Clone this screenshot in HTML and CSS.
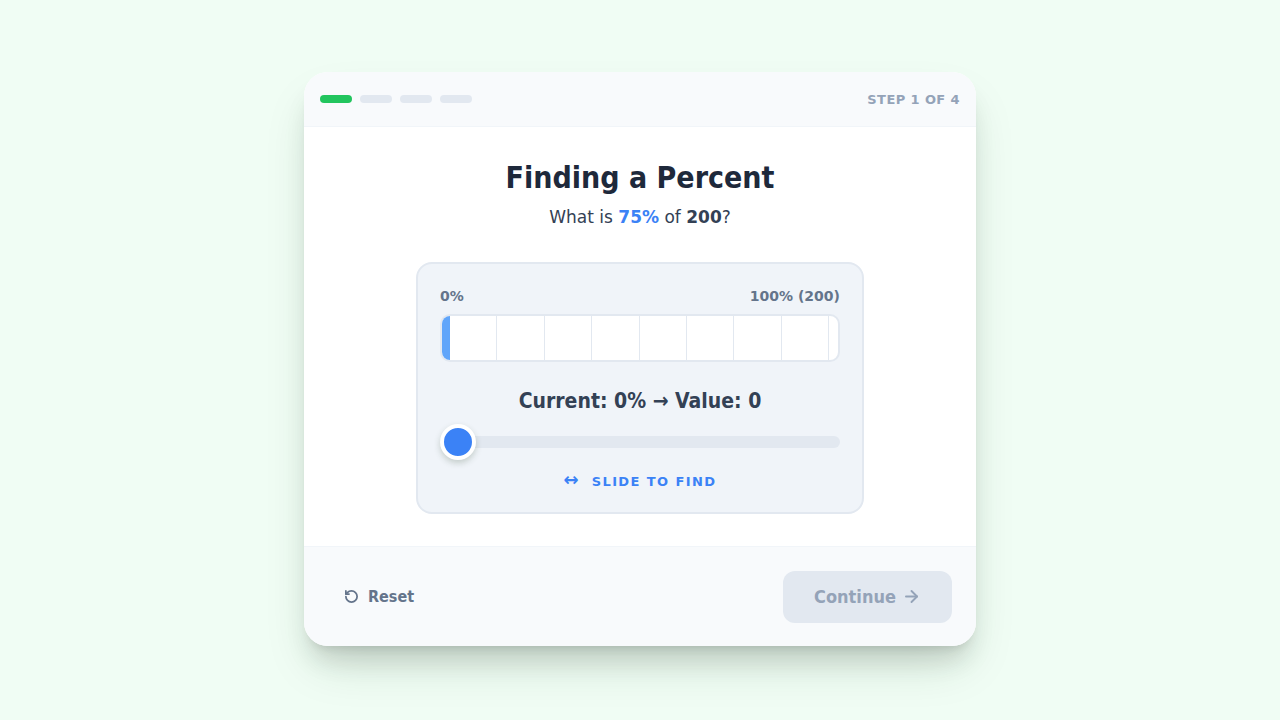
FILE: index.html
```html
<!DOCTYPE html>
<html>
<head>
<meta charset="utf-8">
<link rel="stylesheet" href="styles.css">
</head>
<body>
<div class="card">
  <div class="header">
    <div class="steps">
      <span class="dot active"></span><span class="dot"></span><span class="dot"></span><span class="dot"></span>
    </div>
    <div class="step-label">STEP 1 OF 4</div>
  </div>
  <div class="main">
    <h1 class="title">Finding a Percent</h1>
    <p class="question">What is <b class="pct">75%</b> of <b>200</b>?</p>
    <div class="panel">
      <div class="scale"><span>0%</span><span>100% (200)</span></div>
      <div class="bar">
        <div class="fill"></div>
        <div class="cell"></div><div class="cell"></div><div class="cell"></div><div class="cell"></div>
        <div class="cell"></div><div class="cell"></div><div class="cell"></div><div class="cell"></div><div class="cell"></div>
      </div>
      <div class="current">Current: 0% → Value: 0</div>
      <div class="slider">
        <div class="track"></div>
        <div class="knob"></div>
      </div>
      <div class="hint"><span class="hint-arrow">↔</span>SLIDE TO FIND</div>
    </div>
  </div>
  <div class="footer">
    <button class="reset">
      <svg width="15" height="15" viewBox="0 0 24 24" fill="none" stroke="currentColor" stroke-width="2.8" stroke-linecap="round" stroke-linejoin="round"><path d="M3 12a9 9 0 1 0 9-9 9.75 9.75 0 0 0-6.74 2.74L3 8"/><path d="M3 3v5h5"/></svg>
      <span>Reset</span>
    </button>
    <button class="continue"><span>Continue</span>
      <svg width="19" height="19" viewBox="0 0 24 24" fill="none" stroke="currentColor" stroke-width="2.4" stroke-linecap="round" stroke-linejoin="round"><path d="M5 12h14"/><path d="M12 5l7 7-7 7"/></svg>
    </button>
  </div>
</div>
</body>
</html>
```
FILE: styles.css
```css
* { box-sizing: border-box; }
html, body { margin: 0; padding: 0; }
body {
  width: 1280px;
  height: 720px;
  background: #f0fdf4;
  font-family: "DejaVu Sans", Verdana, sans-serif;
  display: flex;
  justify-content: center;
  align-items: flex-start;
  padding-top: 72px;
}
.card {
  width: 672px;
  height: 574px;
  background: #ffffff;
  border-radius: 24px;
  overflow: hidden;
  display: flex;
  flex-direction: column;
  box-shadow: 0 20px 25px -5px rgba(0,0,0,0.1), 0 8px 10px -6px rgba(0,0,0,0.1), 0 25px 50px -12px rgba(20,60,30,0.18);
}
.header {
  flex: none;
  height: 55px;
  background: #f8fafc;
  border-bottom: 1px solid #f1f5f9;
  display: flex;
  align-items: center;
  justify-content: space-between;
  padding: 0 16px 0 16px;
}
.steps { display: flex; gap: 8px; }
.dot { width: 32px; height: 8px; border-radius: 4px; background: #e2e8f0; display: block; }
.dot.active { background: #22c55e; }
.step-label {
  font-size: 13px;
  font-weight: bold;
  color: #94a3b8;
  letter-spacing: 0.4px;
}
.main {
  flex: 1;
  display: flex;
  flex-direction: column;
  align-items: center;
  padding-top: 32px;
}
.title {
  margin: 0;
  font-family: "DejaVu Sans Condensed", "DejaVu Sans", sans-serif;
  font-stretch: condensed;
  font-size: 30px;
  line-height: 38px;
  color: #1e293b;
  font-weight: bold;
}
.question {
  margin: 8px 0 0;
  font-size: 17px;
  line-height: 24px;
  color: #334155;
}
.question b { color: #334155; }
.question .pct { color: #3b82f6; }
.panel {
  flex: none;
  margin-top: 33px;
  width: 448px;
  height: 252px;
  background: #f0f4f9;
  border: 2px solid #e2e8f0;
  border-radius: 16px;
  padding: 23px 22px 0;
  display: flex;
  flex-direction: column;
}
.panel > * { flex: none; }
.scale {
  display: flex;
  justify-content: space-between;
  font-size: 14px;
  font-weight: bold;
  color: #64748b;
  line-height: 18px;
}
.bar {
  margin-top: 9px;
  height: 48px;
  border: 2px solid #e2e8f0;
  border-radius: 10px;
  background: #ffffff;
  display: flex;
  overflow: hidden;
}
.fill { width: 8px; flex: none; background: #60a5fa; }
.cell { width: 47.4px; flex: none; border-right: 1px solid #e2e8f0; }
.current {
  margin-top: 25px;
  text-align: center;
  font-family: "DejaVu Sans Condensed", "DejaVu Sans", sans-serif;
  font-stretch: condensed;
  font-size: 21px;
  font-weight: bold;
  color: #334155;
  line-height: 28px;
}
.slider {
  position: relative;
  margin-top: 9px;
  height: 36px;
  display: flex;
  align-items: center;
}
.track { width: 100%; height: 12px; border-radius: 6px; background: #e2e8f0; }
.knob {
  position: absolute;
  left: 0;
  top: 0;
  width: 36px;
  height: 36px;
  border-radius: 50%;
  background: #3b82f6;
  border: 4px solid #ffffff;
  box-shadow: 0 3px 6px rgba(40,70,40,0.22);
}
.hint {
  margin-top: 11px;
  text-align: center;
  font-size: 13px;
  font-weight: bold;
  color: #3b82f6;
  letter-spacing: 1.4px;
  line-height: 18px;
}
.hint-arrow { font-size: 18px; margin-right: 13px; letter-spacing: 0; }
.footer {
  flex: none;
  height: 100px;
  background: #f8fafc;
  border-top: 1px solid #f1f5f9;
  display: flex;
  align-items: center;
  justify-content: space-between;
  padding: 0 24px 0 40px;
}
button { font-family: inherit; border: none; cursor: pointer; }
.reset {
  background: none;
  padding: 0;
  display: flex;
  align-items: center;
  gap: 9px;
  font-family: "DejaVu Sans Condensed", "DejaVu Sans", sans-serif;
  font-stretch: condensed;
  font-size: 16px;
  font-weight: bold;
  color: #64748b;
}
.continue {
  width: 169px;
  height: 52px;
  border-radius: 12px;
  background: #e2e8f0;
  color: #94a3b8;
  font-family: "DejaVu Sans Condensed", "DejaVu Sans", sans-serif;
  font-stretch: condensed;
  font-size: 18px;
  font-weight: bold;
  display: flex;
  align-items: center;
  justify-content: center;
  gap: 6px;
  padding: 0;
}
```
